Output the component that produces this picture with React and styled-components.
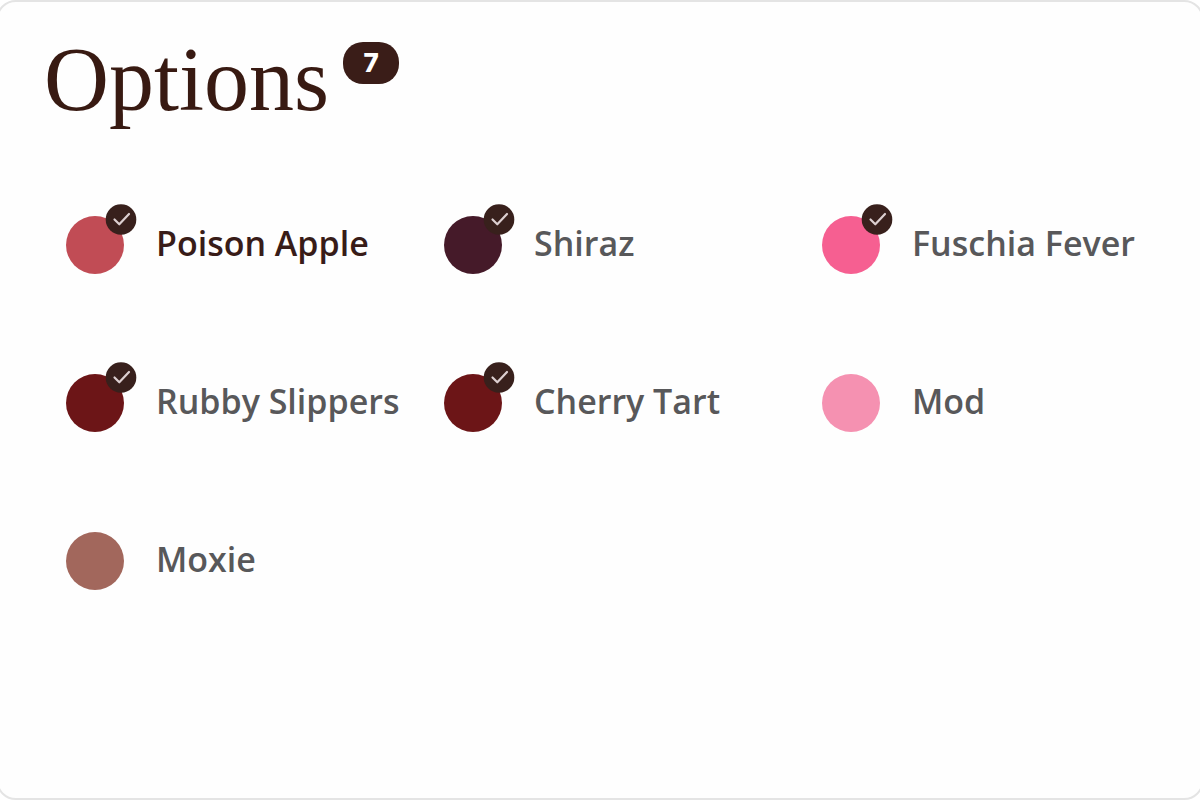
import React from "react";
import styled, { createGlobalStyle } from "styled-components";

const GlobalStyle = createGlobalStyle`
  *, *::before, *::after { box-sizing: border-box; }
  body {
    margin: 0;
    overflow-x: hidden;
    background: #fff;
    font-family: "Open Sans", "Noto Sans", sans-serif;
  }
`;

const Panel = styled.main`
  min-height: 100vh;
  margin: 0 -4px;
  padding: 40px 2px 40px 46px;
  background: #fefefe;
  border: 2px solid #e4e4e4;
  border-radius: 20px;
`;

const Header = styled.header`
  display: flex;
  align-items: flex-start;
  gap: 14px;
  height: 92px;
`;

const Title = styled.h1`
  margin: 0;
  color: #381a12;
  font-family: "Liberation Serif", serif;
  font-size: 90px;
  font-weight: 400;
  line-height: 76px;
`;

const Count = styled.span`
  width: 56px;
  border-radius: 20px;
  background: #3a1d18;
  color: #fff;
  font-family: Inter, sans-serif;
  font-size: 26px;
  font-weight: 800;
  line-height: 42px;
  text-align: center;
`;

const Grid = styled.ul`
  display: grid;
  grid-template-columns: repeat(3, 1fr);
  row-gap: 100px;
  margin: 82px 0 0;
  padding: 0 0 0 22px;
  list-style: none;
`;

const Option = styled.label`
  display: flex;
  align-items: center;
  gap: 32px;
  color: ${(p) => (p.$active ? "#381c18" : "#58585a")};
  cursor: pointer;
`;

const Name = styled.span`
  padding-bottom: 4px;
  font-size: 34px;
  font-weight: 600;
  line-height: 48px;
  white-space: nowrap;
`;

const Swatch = styled.span`
  position: relative;
  flex: none;
  width: 58px;
  height: 58px;
  border-radius: 50%;
  background: ${(p) => p.$color};
`;

const Check = styled.input`
  position: absolute;
  inset: 0;
  width: 100%;
  height: 100%;
  margin: 0;
  appearance: none;
  border-radius: 50%;
  cursor: pointer;
  & + svg { display: none; }
  &:checked + svg { display: block; }
`;

const Badge = styled.svg`
  position: absolute;
  top: -12px;
  right: -13px;
  width: 32px;
  height: 32px;
  pointer-events: none;
`;

const options = [
  { name: "Poison Apple", color: "#c14c55", checked: true, active: true },
  { name: "Shiraz", color: "#451a29", checked: true },
  { name: "Fuschia Fever", color: "#f65f91", checked: true },
  { name: "Rubby Slippers", color: "#6c1517", checked: true },
  { name: "Cherry Tart", color: "#6c1517", checked: true },
  { name: "Mod", color: "#f591b1" },
  { name: "Moxie", color: "#a2675c" },
];

export default function App() {
  return (
    <>
      <GlobalStyle />
      <Panel>
        <Header>
          <Title>Options</Title>
          <Count>{options.length}</Count>
        </Header>
        <Grid>
          {options.map((o) => (
            <li key={o.name}>
              <Option $active={o.active}>
                <Swatch $color={o.color}>
                  <Check type="checkbox" defaultChecked={o.checked} />
                  <Badge viewBox="0 0 32 32" aria-hidden="true">
                    <circle cx="16" cy="15.5" r="15.3" fill="#38201c" />
                    <path
                      d="M9.5 15.5l4.8 4.8L24 10"
                      fill="none"
                      stroke="#dccfd0"
                      strokeWidth="2.2"
                      strokeLinejoin="round"
                      strokeLinecap="round"
                    />
                  </Badge>
                </Swatch>
                <Name>{o.name}</Name>
              </Option>
            </li>
          ))}
        </Grid>
      </Panel>
    </>
  );
}
